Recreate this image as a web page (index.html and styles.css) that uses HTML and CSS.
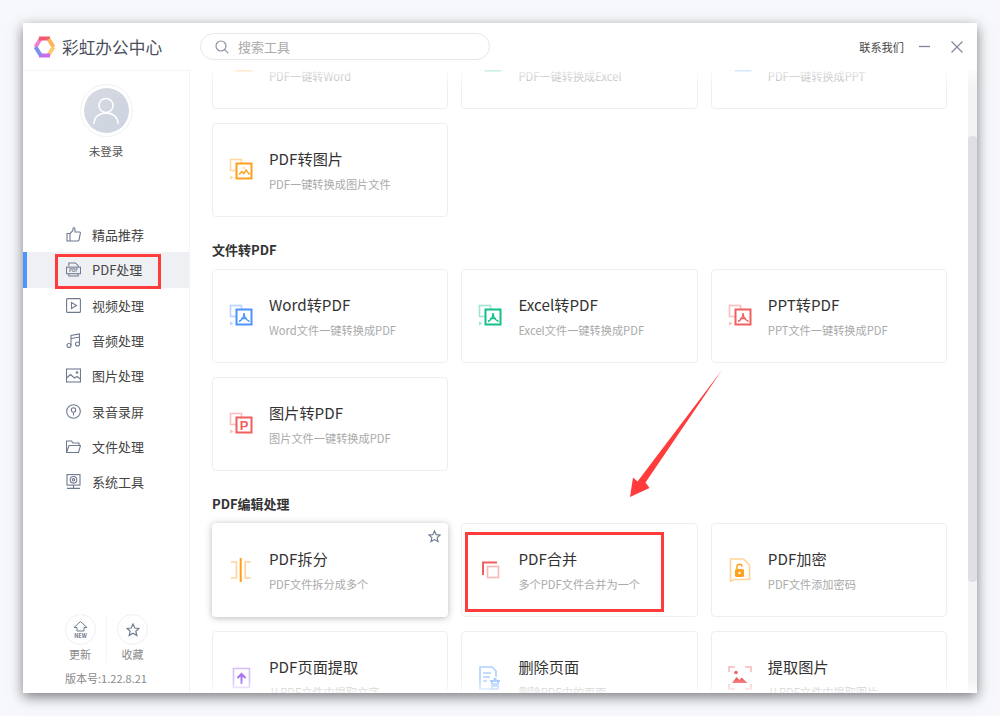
FILE: index.html
```html
<!DOCTYPE html>
<html lang="zh-CN">
<head>
    <meta charset="UTF-8">
    <title>彩虹办公中心</title>
    <link rel="stylesheet" href="styles.css">
</head>
<body>
    <svg class="svg-defs" width="0" height="0" aria-hidden="true">
        <symbol id="conv" viewBox="0 0 24 24">
            <rect x="1.5" y="1.5" width="11" height="11" fill="none" stroke="currentColor" stroke-width="1.6" opacity="0.4"/>
            <path d="M1 17.5l3.5 2-3.5 2z" fill="currentColor" opacity="0.4"/>
            <rect x="7.5" y="5.5" width="15" height="15" fill="#fff" stroke="currentColor" stroke-width="2"/>
        </symbol>
    </svg>

    <div class="window">
        <!-- 顶部栏 -->
        <div class="header">
            <div class="brand">
                <svg class="logo" width="23" height="22" viewBox="0 0 23 22" fill="none" stroke-width="4">
                    <path d="M2.500 11L7.500 3" stroke="#f27fd0"/>
                    <path d="M6 2.500h11" stroke="#f2596e"/>
                    <path d="M15.500 3l5 8" stroke="#fdb35a"/>
                    <path d="M20.500 11l-5 8" stroke="#fcca6b"/>
                    <path d="M17 19.500H6" stroke="#c56cf0"/>
                    <path d="M7.500 19l-5-8" stroke="#7b8ff2"/>
                </svg>
                <span class="brand-name">彩虹办公中心</span>
            </div>
            <div class="search-box">
                <svg width="14" height="14" viewBox="0 0 14 14" fill="none" stroke="#8c93a3" stroke-width="1.2">
                    <circle cx="6" cy="6" r="5"/>
                    <path d="M9.700 9.700L13.300 13.300"/>
                </svg>
                <span class="search-text">搜索工具</span>
            </div>
            <div class="window-actions">
                <a class="contact">联系我们</a>
                <svg width="11" height="11" viewBox="0 0 11 11" stroke="#7d8596" stroke-width="1.300"><path d="M0 5.500h11"/></svg>
                <svg class="close-icon" width="12" height="12" viewBox="0 0 12 12" stroke="#7d8596" stroke-width="1.100"><path d="M.5.500l11 11M11.500.500l-11 11"/></svg>
            </div>
        </div>

        <div class="body">
            <!-- 左侧菜单 -->
            <div class="sidebar">
                <div class="avatar">
                    <div class="avatar-inner">
                        <svg width="26" height="28" viewBox="0 0 26 28" fill="none" stroke="#fff" stroke-width="1.500">
                            <circle cx="13" cy="8.500" r="7"/>
                            <path d="M1 27c0-7 5-11 12-11s12 4 12 11"/>
                        </svg>
                    </div>
                </div>
                <div class="user-name">未登录</div>

                <div class="menu">
                    <a class="menu-item">
                        <svg width="15" height="15" viewBox="0 0 15 15"><path d="M1 6.500h3v7.500H1zM4 6.500l3-3V1.500c0-1 2-1 2 .5v3h4.500c1 0 1 1 .8 1.500L13 13c-.2.700-.6 1-1.200 1H4"/></svg>
                        精品推荐
                    </a>
                    <a class="menu-item active">
                        <svg width="15" height="15" viewBox="0 0 16 15"><path d="M3 4V.5h7l3 3V5M3 12v2.500h10V12"/><rect x=".5" y="5" width="15" height="7"/><text class="pdf-mini" x="8" y="10.500">PDF</text></svg>
                        PDF处理
                    </a>
                    <a class="menu-item">
                        <svg width="15" height="15" viewBox="0 0 15 15"><rect x=".6" y=".6" width="13.800" height="13.800" rx="1"/><path d="M5.500 4.500v6l5-3z"/></svg>
                        视频处理
                    </a>
                    <a class="menu-item">
                        <svg width="15" height="15" viewBox="0 0 15 15"><circle cx="3" cy="12.500" r="2"/><circle cx="11.500" cy="11" r="2"/><path d="M5 12.500V2.500L13.500 1v10M5 5.500l8.500-1.500"/></svg>
                        音频处理
                    </a>
                    <a class="menu-item">
                        <svg width="15" height="15" viewBox="0 0 15 15"><rect x=".5" y="1" width="14" height="13"/><path d="M.5 10l4-3.500 4 3.500 2.500-1.500 3.500 2.500"/><circle cx="11" cy="4.500" r=".8"/></svg>
                        图片处理
                    </a>
                    <a class="menu-item">
                        <svg width="15" height="15" viewBox="0 0 15 15"><circle cx="7.500" cy="7.500" r="6.800"/><circle cx="7.500" cy="6" r="2.200"/><path d="M7.500 8.500v3"/></svg>
                        录音录屏
                    </a>
                    <a class="menu-item">
                        <svg width="15" height="15" viewBox="0 0 15 15"><path d="M.5 13.500V2h5l1.500 2h6v2.500M.5 13.500L3 6.500h11.500l-2 7z"/></svg>
                        文件处理
                    </a>
                    <a class="menu-item">
                        <svg width="15" height="15" viewBox="0 0 15 15"><rect x="1" y=".6" width="13" height="10.500"/><circle cx="7.500" cy="5.800" r="3.300"/><circle cx="7.500" cy="5.800" r="1.200"/><path d="M7.500 11v3M1 14.400h13"/></svg>
                        系统工具
                    </a>
                </div>

                <div class="sidebar-footer">
                    <div class="footer-btns">
                        <div class="footer-btn">
                            <div class="footer-circle">
                                <svg width="19" height="19" viewBox="0 0 19 19" fill="none" stroke="#6f7a90">
                                    <path d="M3 7.500l6.500-6 6.500 6h-3V11H6V7.500z"/>
                                    <text class="new-mini" x="9.500" y="17.500">NEW</text>
                                </svg>
                            </div>
                            <span>更新</span>
                        </div>
                        <div class="footer-btn">
                            <div class="footer-circle">
                                <svg width="14" height="14" viewBox="0 0 14 14" fill="none" stroke="#6f7a90" stroke-width="1.200"><path d="M7 1l1.800 4 4.200.4-3.200 2.800 1 4.300L7 10.300l-3.800 2.200 1-4.300L1 5.400 5.200 5z"/></svg>
                            </div>
                            <span>收藏</span>
                        </div>
                    </div>
                    <div class="version">版本号:1.22.8.21</div>
                </div>
            </div>

            <!-- 工具列表 -->
            <div class="main">
                <div class="scroll-area">
                    <div class="tool-list">
                        <div class="card-grid">
                            <div class="card">
                                <svg class="card-icon orange" viewBox="0 0 24 24"><use href="#conv"/></svg>
                                <div class="card-text"><div class="card-title"></div><div class="card-desc">PDF一键转Word</div></div>
                            </div>
                            <div class="card">
                                <svg class="card-icon green" viewBox="0 0 24 24"><use href="#conv"/></svg>
                                <div class="card-text"><div class="card-title"></div><div class="card-desc">PDF一键转换成Excel</div></div>
                            </div>
                            <div class="card">
                                <svg class="card-icon blue" viewBox="0 0 24 24"><use href="#conv"/></svg>
                                <div class="card-text"><div class="card-title"></div><div class="card-desc">PDF一键转换成PPT</div></div>
                            </div>
                            <div class="card">
                                <svg class="card-icon orange" viewBox="0 0 24 24"><use href="#conv"/><path class="glyph" d="M10 16.500l3-3 2 2 2-3.500 3.500 4.500M15 9.500v1"/></svg>
                                <div class="card-text"><div class="card-title">PDF转图片</div><div class="card-desc">PDF一键转换成图片文件</div></div>
                            </div>
                        </div>

                        <h2 class="group-title">文件转PDF</h2>
                        <div class="card-grid">
                            <div class="card">
                                <svg class="card-icon blue" viewBox="0 0 24 24"><use href="#conv"/><path class="glyph" d="M10 17.500c3-1.500 5-4.500 5-8.500 0 4 2.500 7 5.500 8.500M12 14.500h6"/></svg>
                                <div class="card-text"><div class="card-title">Word转PDF</div><div class="card-desc">Word文件一键转换成PDF</div></div>
                            </div>
                            <div class="card">
                                <svg class="card-icon green" viewBox="0 0 24 24"><use href="#conv"/><path class="glyph" d="M10 17.500c3-1.500 5-4.500 5-8.500 0 4 2.500 7 5.500 8.500M12 14.500h6"/></svg>
                                <div class="card-text"><div class="card-title">Excel转PDF</div><div class="card-desc">Excel文件一键转换成PDF</div></div>
                            </div>
                            <div class="card">
                                <svg class="card-icon red" viewBox="0 0 24 24"><use href="#conv"/><path class="glyph" d="M10 17.500c3-1.500 5-4.500 5-8.500 0 4 2.500 7 5.500 8.500M12 14.500h6"/></svg>
                                <div class="card-text"><div class="card-title">PPT转PDF</div><div class="card-desc">PPT文件一键转换成PDF</div></div>
                            </div>
                            <div class="card">
                                <svg class="card-icon red" viewBox="0 0 24 24"><use href="#conv"/><text class="glyph-text" x="15" y="18">P</text></svg>
                                <div class="card-text"><div class="card-title">图片转PDF</div><div class="card-desc">图片文件一键转换成PDF</div></div>
                            </div>
                        </div>

                        <h2 class="group-title">PDF编辑处理</h2>
                        <div class="card-grid">
                            <div class="card hovered">
                                <svg class="card-icon orange" viewBox="0 0 24 24"><path class="soft" d="M2 4h5.500v16H2M21.700 4h-5.500v16h5.500"/><path class="glyph strong" d="M11.700 0v24"/></svg>
                                <div class="card-text"><div class="card-title">PDF拆分</div><div class="card-desc">PDF文件拆分成多个</div></div>
                                <svg class="star" width="13" height="13" viewBox="0 0 14 14" fill="none" stroke="#6f7a90" stroke-width="1.200"><path d="M7 1l1.800 4 4.200.4-3.200 2.800 1 4.300L7 10.300l-3.800 2.200 1-4.300L1 5.400 5.200 5z"/></svg>
                            </div>
                            <div class="card">
                                <svg class="card-icon red" viewBox="0 0 24 24"><rect class="soft" x="9.500" y="8.500" width="11" height="11"/><path class="glyph strong" d="M5 17V4.500h14"/></svg>
                                <div class="card-text"><div class="card-title">PDF合并</div><div class="card-desc">多个PDF文件合并为一个</div></div>
                            </div>
                            <div class="card">
                                <svg class="card-icon orange" viewBox="0 0 24 24"><path class="soft" d="M2.500 1h13l6 6v14.500h-15l-4 1.500z"/><rect class="fill" x="7" y="11" width="9" height="8" rx="1.500"/><path class="glyph" d="M9 11V8.500c0-3 5-3 5 0"/><circle cx="11.500" cy="15" r="1.200" fill="#fff"/></svg>
                                <div class="card-text"><div class="card-title">PDF加密</div><div class="card-desc">PDF文件添加密码</div></div>
                            </div>
                            <div class="card">
                                <svg class="card-icon purple" viewBox="0 0 24 24"><rect class="soft" x="4.500" y="2.500" width="16" height="19"/><path class="glyph strong" d="M12.500 18V8M8.500 12l4-4 4 4"/></svg>
                                <div class="card-text"><div class="card-title">PDF页面提取</div><div class="card-desc">从PDF文件中提取文字</div></div>
                            </div>
                            <div class="card">
                                <svg class="card-icon blue" viewBox="0 0 24 24"><path class="soft" d="M14 23H2V1h12l4 4v6M5 7h8M5 11h7M5 15h4"/><path class="glyph pale" d="M12 15h10M14 15v8h6v-8M15.500 13h3M16 17v4M18 17v4"/></svg>
                                <div class="card-text"><div class="card-title">删除页面</div><div class="card-desc">删除PDF中的页面</div></div>
                            </div>
                            <div class="card">
                                <svg class="card-icon red" viewBox="0 0 24 24"><path class="soft" d="M1 6V1h6M17 1h6v5M23 18v5h-6M7 23H1v-5"/><path class="fill" d="M4 17l4.500-6 3 3 2-2.500 6 5.500z"/><circle class="fill" cx="8" cy="6.500" r="1.800"/></svg>
                                <div class="card-text"><div class="card-title">提取图片</div><div class="card-desc">从PDF文件中提取图片</div></div>
                            </div>
                        </div>
                    </div>
                </div>
                <div class="scrollbar"><div class="scrollbar-thumb"></div></div>
                <div class="fade-top"></div>
                <div class="fade-bottom"></div>
            </div>
        </div>

        <!-- 截图上的红色标注 -->
        <div class="mark mark-menu"></div>
        <div class="mark mark-card"></div>
        <svg class="mark-arrow" width="100" height="132" viewBox="0 0 100 132">
            <path d="M95 1L18.500 113.500l4 5.500L3 128l3-19.500 4.500 4z" fill="#ff3b3b"/>
        </svg>
    </div>
</body>
</html>
```
FILE: styles.css
```css
* {
    margin: 0;
    padding: 0;
    box-sizing: border-box;
}

body {
    font-family: "Noto Sans CJK SC", "Noto Sans", sans-serif;
    background-color: #f7f8fc;
    padding: 23px;
    height: 716px;
    overflow: hidden;
    color: #333;
}

.svg-defs {
    position: absolute;
}

.window {
    position: relative;
    width: 954px;
    height: 670px;
    background-color: white;
    box-shadow: 0 4px 12px rgba(0, 0, 0, 0.5);
    display: flex;
    flex-direction: column;
}

/* 顶部栏 */
.header {
    height: 47px;
    display: flex;
    align-items: center;
    flex-shrink: 0;
}

.brand {
    width: 177px;
    padding-left: 10px;
    display: flex;
    align-items: center;
    gap: 6px;
}

.brand-name {
    font-size: 16.7px;
    color: #4a4f5c;
    white-space: nowrap;
}

.search-box {
    width: 290px;
    height: 27px;
    border: 1.5px solid #e6e7ea;
    border-radius: 14px;
    display: flex;
    align-items: center;
    gap: 9px;
    padding-left: 14px;
}

.search-text {
    font-size: 13px;
    color: #aaa;
}

.window-actions {
    margin-left: auto;
    display: flex;
    align-items: center;
    padding-right: 14px;
}

.contact {
    font-size: 11.2px;
    color: #444;
    margin-right: 15px;
}

.close-icon {
    margin-left: 21px;
}

.body {
    flex: 1;
    display: flex;
    min-height: 0;
}

/* 左侧菜单 */
.sidebar {
    width: 167px;
    flex-shrink: 0;
    border-top: 1px solid #f5f5f7;
    border-right: 1px solid #f3f3f5;
    display: flex;
    flex-direction: column;
    align-items: center;
    padding-top: 13px;
}

.avatar {
    width: 53px;
    height: 53px;
    border-radius: 50%;
    border: 1px solid #f0f1f4;
    display: flex;
    align-items: center;
    justify-content: center;
}

.avatar-inner {
    width: 45px;
    height: 45px;
    border-radius: 50%;
    background: linear-gradient(135deg, #d6dae2 0%, #ccd3e0 100%);
    display: flex;
    align-items: center;
    justify-content: center;
}

.user-name {
    font-size: 11.5px;
    line-height: 16px;
    margin-top: 6px;
    color: #555;
}

.menu {
    width: 100%;
    margin-top: 58px;
}

.menu-item {
    height: 35.3px;
    display: flex;
    align-items: center;
    gap: 11px;
    border-left: 4px solid transparent;
    padding-left: 39px;
    font-size: 13px;
    color: #444;
}

.menu-item svg {
    fill: none;
    stroke: #6f7a90;
    stroke-width: 1.1;
    flex-shrink: 0;
}

.menu-item.active {
    background-color: #eff0f3;
    border-left-color: #4d94ff;
}

.pdf-mini {
    font-size: 5px;
    font-weight: 700;
    text-anchor: middle;
    fill: #6f7a90;
    stroke: none;
}

.sidebar-footer {
    margin-top: auto;
    padding-bottom: 7px;
    display: flex;
    flex-direction: column;
    align-items: center;
}

.footer-btns {
    display: flex;
    margin-bottom: 8px;
}

.footer-btn {
    width: 52px;
    display: flex;
    flex-direction: column;
    align-items: center;
    gap: 1px;
    font-size: 11px;
    line-height: 16px;
    color: #888;
}

.footer-btn + .footer-btn {
    border-left: 1px solid #f5f5f7;
}

.footer-circle {
    width: 31px;
    height: 31px;
    border: 1px solid #f0f0f3;
    border-radius: 50%;
    display: flex;
    align-items: center;
    justify-content: center;
}

.new-mini {
    font-size: 5.5px;
    font-weight: 700;
    text-anchor: middle;
    fill: #6f7a90;
    stroke: none;
}

.version {
    font-size: 11px;
    line-height: 16px;
    color: #888;
    white-space: nowrap;
}

/* 工具列表 */
.main {
    flex: 1;
    min-width: 0;
    position: relative;
    display: flex;
}

.scroll-area {
    flex: 1;
    min-width: 0;
    overflow: hidden;
    padding-left: 22px;
}

.tool-list {
    width: 735px;
    margin-top: -55px;
}

.card-grid {
    display: grid;
    grid-template-columns: repeat(3, 1fr);
    column-gap: 13.25px;
    row-gap: 14px;
}

.group-title {
    font-size: 13px;
    font-weight: 700;
    line-height: 18px;
    margin-top: 24px;
    margin-bottom: 10px;
    color: #333;
}

.card {
    position: relative;
    height: 94px;
    background-color: white;
    border: 1px solid #efeff1;
    border-radius: 4px;
    display: flex;
    align-items: center;
    padding-left: 16px;
}

.card.hovered {
    border-color: transparent;
    box-shadow: 0 1px 7px rgba(0, 0, 0, 0.28);
}

.card-icon {
    width: 24px;
    height: 24px;
    flex-shrink: 0;
    margin-right: 16px;
    overflow: visible;
}

.card-text {
    white-space: nowrap;
}

.card-title {
    font-size: 15.2px;
    line-height: 20px;
    min-height: 20px;
    color: #333;
}

.card-desc {
    font-size: 11.2px;
    line-height: 16px;
    margin-top: 8px;
    color: #aaa;
}

.star {
    position: absolute;
    top: 6px;
    right: 6px;
}

.orange { color: #ff9f1c; }
.green { color: #14bf8c; }
.blue { color: #4d94ff; }
.red { color: #f25f5f; }
.purple { color: #a873f5; }

.glyph {
    fill: none;
    stroke: currentColor;
    stroke-width: 1.4;
}

.glyph.strong {
    stroke-width: 2;
}

.glyph.pale {
    opacity: 0.65;
}

.soft {
    fill: none;
    stroke: currentColor;
    stroke-width: 1.6;
    opacity: 0.45;
}

.fill {
    fill: currentColor;
}

.glyph-text {
    font-family: "Liberation Sans", sans-serif;
    font-size: 13px;
    font-weight: 700;
    text-anchor: middle;
    fill: currentColor;
}

.scrollbar {
    width: 9px;
    flex-shrink: 0;
    background-color: #f3f3f5;
}

.scrollbar-thumb {
    height: 446px;
    margin-top: 66px;
    background-color: #dfe0e5;
    border-radius: 4px;
}

.fade-top,
.fade-bottom {
    position: absolute;
    left: 0;
    right: 0;
}

.fade-top {
    top: 0;
    height: 18px;
    background: linear-gradient(to bottom, rgba(255, 255, 255, 0.8), rgba(255, 255, 255, 0.35) 10px, rgba(255, 255, 255, 0));
}

.fade-bottom {
    bottom: 0;
    height: 14px;
    background: linear-gradient(to top, rgba(255, 255, 255, 0.8), rgba(255, 255, 255, 0));
}

/* 红色标注 */
.mark {
    position: absolute;
    border: 3px solid #ff3b3b;
}

.mark-menu {
    left: 32px;
    top: 231px;
    width: 106px;
    height: 35px;
}

.mark-card {
    left: 442px;
    top: 509px;
    width: 199px;
    height: 80px;
}

.mark-arrow {
    position: absolute;
    left: 604px;
    top: 346px;
}
```
